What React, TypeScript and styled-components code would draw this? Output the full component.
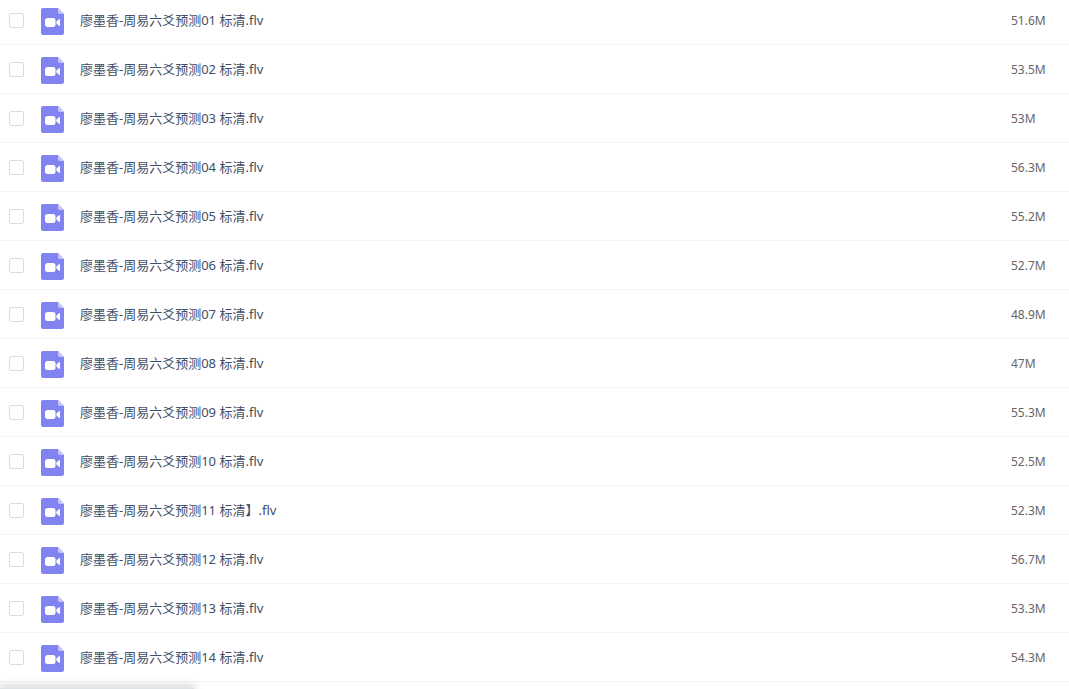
import React from 'react';
import styled, { createGlobalStyle } from 'styled-components';

const GlobalStyle = createGlobalStyle`
  body {
    margin: 0;
    overflow: hidden;
    background: #fff;
    font-family: 'Noto Sans', 'Noto Sans CJK SC', sans-serif;
  }
`;

const Viewport = styled.main`
  position: relative;
  height: 100vh;
  overflow: hidden;
`;

/* The list is scrolled a few pixels past the top of its first row. */
const FileTable = styled.table`
  width: 100%;
  margin-top: -4px;
  border-collapse: separate;
  border-spacing: 0;
  table-layout: fixed;
`;

const Row = styled.tr`
  height: 49px;
`;

const Cell = styled.td<{ $width?: number }>`
  box-sizing: border-box;
  height: 49px;
  width: ${({ $width }) => ($width ? `${$width}px` : 'auto')};
  padding: 0;
  border-bottom: 1px solid #f1f5fd;
  vertical-align: middle;
`;

const NameLabel = styled.label`
  display: flex;
  align-items: center;
  gap: 16px;
  font-size: 13px;
  line-height: 20px;
  color: #424e67;
  white-space: nowrap;
`;

const Size = styled.span`
  display: block;
  padding-top: 2px;
  font-size: 12px;
  line-height: 20px;
  color: #666;
`;

const Checkbox = styled.input`
  appearance: none;
  box-sizing: border-box;
  display: block;
  width: 15px;
  height: 15px;
  margin: 1px 0 0 9px;
  border: 1px solid #d9dce8;
  border-radius: 2px;
  background: #fff;

  &:checked {
    background: #8183f1;
  }
`;

const Icon = styled.svg`
  display: block;
  flex: none;
  margin-top: 2px;
`;

const StatusEdge = styled.div`
  position: absolute;
  left: 0;
  bottom: 0;
  width: 194px;
  height: 1px;
  background: #dee1e6;
  box-shadow: 0 0 9px 1px rgba(0, 0, 0, 0.4);
`;

const VideoIcon = () => (
  <Icon width="23" height="27" viewBox="0 0 23 27" aria-hidden="true">
    <path d="M2 0H17L23 6V25Q23 27 21 27H2Q0 27 0 25V2Q0 0 2 0Z" fill="#8183f1" />
    <path d="M17 0L23 6H19Q17 6 17 4Z" fill="#c7c8fa" />
    <rect x="4" y="10" width="10.5" height="9" rx="2.5" fill="#fff" />
    <path d="M15.2 14.5Q15.2 13.8 16 13L18 11.2Q19 10.5 19 11.7V17.3Q19 18.5 18 17.8L16 16Q15.2 15.2 15.2 14.5Z" fill="#fff" />
  </Icon>
);

const sizes = [
  '51.6M', '53.5M', '53M', '56.3M', '55.2M', '52.7M', '48.9M',
  '47M', '55.3M', '52.5M', '52.3M', '56.7M', '53.3M', '54.3M',
];

const files = sizes.map((size, index) => {
  const number = String(index + 1).padStart(2, '0');
  const bracket = number === '11' ? '】' : '';
  return { id: `file-${number}`, name: `廖墨香-周易六爻预测${number} 标清${bracket}.flv`, size };
});

export default function App() {
  return (
    <>
      <GlobalStyle />
      <Viewport>
        <FileTable>
          <tbody>
            {files.map((file) => (
              <Row key={file.id}>
                <Cell $width={41}>
                  <Checkbox type="checkbox" id={file.id} />
                </Cell>
                <Cell>
                  <NameLabel htmlFor={file.id}>
                    <VideoIcon />
                    <span>{file.name}</span>
                  </NameLabel>
                </Cell>
                <Cell $width={58}>
                  <Size>{file.size}</Size>
                </Cell>
              </Row>
            ))}
          </tbody>
        </FileTable>
        <StatusEdge />
      </Viewport>
    </>
  );
}
